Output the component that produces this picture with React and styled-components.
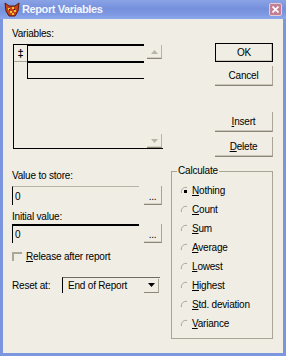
import React from 'react';
import styled, { createGlobalStyle } from 'styled-components';

const GlobalStyle = createGlobalStyle`
  html, body {
    margin: 0;
    padding: 0;
    background: #efede4;
  }
  body {
    font-family: 'Liberation Sans', Arial, sans-serif;
    font-size: 10px;
    letter-spacing: -0.2px;
    color: #000;
  }
`;

const Window = styled.div`
  width: 286px;
  height: 356px;
  box-sizing: border-box;
  border: 3px solid #7b95de;
  border-top: none;
  background: #efede4;
  display: flex;
  flex-direction: column;
`;

const TitleBar = styled.div`
  height: 19px;
  margin: 0 -3px;
  padding: 0 3px 0 4px;
  display: flex;
  align-items: center;
  gap: 2px;
  background: linear-gradient(to bottom, #8aa3e6 0%, #7690dc 45%, #7e99e2 75%, #8ca8ec 100%);
`;

const TitleText = styled.span`
  flex: 1;
  color: #f4f6ff;
  font-size: 11px;
  font-weight: bold;
  letter-spacing: -0.4px;
  line-height: 19px;
`;

const CloseButton = styled.div`
  width: 13px;
  height: 13px;
  box-sizing: border-box;
  margin-right: 1px;
  border: 1px solid #e4ccd8;
  border-radius: 2px;
  background: #c27f94;
  display: flex;
  align-items: center;
  justify-content: center;
`;

const Body = styled.div`
  flex: 1;
  display: grid;
  grid-template-columns: 150px 102px;
  column-gap: 9px;
  align-items: start;
  padding: 9px 0 0 9px;
`;

const Column = styled.div`
  display: flex;
  flex-direction: column;
`;

const Label = styled.div`
  height: 12px;
  line-height: 12px;
  margin-top: ${p => p.$top || 0}px;
  white-space: nowrap;
`;

const ListBox = styled.div`
  margin: 4px 0 0 1px;
  width: 150px;
  height: 105px;
  box-sizing: border-box;
  border-left: 1px solid #000;
  border-bottom: 1px solid #000;
  display: flex;
`;

const ListGrid = styled.div`
  width: 130px;
  display: grid;
  grid-template-columns: 13px 117px;
  grid-template-rows: 19px 16px;
  align-content: start;
`;

const CornerCell = styled.div`
  box-sizing: border-box;
  border-top: 1px solid #000;
  border-bottom: 1px solid #a8a597;
  height: 18px;
  font-weight: bold;
  font-size: 11px;
  line-height: 16px;
  text-align: center;
`;

const DataCell = styled.div`
  box-sizing: border-box;
  border-left: 1px solid #000;
  border-top: ${p => (p.$first ? '2px solid #000' : 'none')};
  border-bottom: ${p => (p.$first ? '2px' : '1px')} solid #000;
`;

const ScrollColumn = styled.div`
  margin-left: 3px;
  width: 15px;
  padding-top: 1px;
  display: flex;
  flex-direction: column;
  justify-content: space-between;
`;

const ScrollButton = styled.div`
  width: 15px;
  height: 14px;
  box-sizing: border-box;
  border-right: 1px solid #b8b5a6;
  border-bottom: 1px solid #8a877a;
  box-shadow: inset 0 -1px 0 #d6d3c5;
  display: flex;
  align-items: center;
  justify-content: center;
`;

const FieldRow = styled.div`
  display: flex;
  gap: 5px;
  margin-top: ${p => p.$top || 0}px;
`;

const TextField = styled.div`
  width: 127px;
  height: 19px;
  box-sizing: border-box;
  border-left: 1px solid #000;
  border-top: ${p => (p.$focused ? '2px solid #000' : '1px solid #b8b5a6')};
  padding-left: 2px;
  line-height: 17px;
  display: flex;
  align-items: center;
`;

const SmallButton = styled.div`
  width: 18px;
  height: 19px;
  box-sizing: border-box;
  border-right: 1px solid #a8a597;
  border-bottom: 1px solid #8a877a;
  box-shadow: inset 0 -1px 0 #d6d3c5;
  display: flex;
  align-items: flex-end;
  justify-content: center;
  padding-bottom: 3px;
  line-height: 8px;
`;

const CheckRow = styled.label`
  display: flex;
  align-items: center;
  gap: 4px;
  height: 12px;
  margin-top: 7px;
`;

const CheckBox = styled.span`
  width: 10px;
  height: 9px;
  box-sizing: border-box;
  border-top: 2px solid #aca899;
  border-left: 2px solid #aca899;
`;

const ResetRow = styled.div`
  display: flex;
  align-items: center;
  margin-top: 15px;
`;

const ResetLabel = styled.span`
  width: 50px;
`;

const Dropdown = styled.div`
  width: 98px;
  height: 16px;
  box-sizing: border-box;
  border-left: 1px solid #000;
  border-top: 1px solid #6f6d62;
  padding-left: 5px;
  display: flex;
  align-items: center;
  justify-content: space-between;
`;

const DropArrow = styled.div`
  width: 15px;
  height: 14px;
  margin-right: 1px;
  box-sizing: border-box;
  border-right: 1px solid #a8a597;
  border-bottom: 1px solid #8a877a;
  display: flex;
  align-items: center;
  justify-content: center;
`;

const DialogButton = styled.div`
  align-self: flex-end;
  width: 58px;
  height: ${p => (p.$default ? 19 : 20)}px;
  margin-top: ${p => p.$top}px;
  box-sizing: border-box;
  border: ${p => (p.$default ? '1px solid #000' : 'none')};
  border-right: 1px solid ${p => (p.$default ? '#000' : '#a8a597')};
  border-bottom: 1px solid ${p => (p.$default ? '#000' : '#8a877a')};
  box-shadow: inset ${p => (p.$default ? '-1px' : '0')} -1px 0 #c9c6b7;
  display: flex;
  align-items: center;
  justify-content: center;
  font-size: 10px;
`;

const Group = styled.fieldset`
  margin: 8px 0 0;
  padding: 4px 0 5px 0;
  min-width: 0;
  border: 1px solid #a8a597;
  display: flex;
  flex-direction: column;
`;

const Legend = styled.legend`
  margin-left: 5px;
  padding: 0 1px;
  line-height: 12px;
`;

const RadioRow = styled.div`
  height: 19px;
  padding-left: 8px;
  display: flex;
  align-items: center;
  gap: 2px;
`;

const AppIcon = () => (
  <svg width="16" height="16" viewBox="0 0 16 16">
    <path d="M1 1 L5 4 L11 4 L15 1 L14 9 L11 14 L5 14 L2 9 Z" fill="#c8401c" stroke="#5a1a08" strokeWidth="1" />
    <path d="M4 6h2v2H4zM8 5h2v2H8zM10 8h2v2h-2zM6 9h2v2H6zM8 11h2v2H8z" fill="#f2c23a" />
    <path d="M5 7h1v1H5zM10 7h1v1h-1z" fill="#1a1a1a" />
  </svg>
);

const Radio = ({ checked }) => (
  <svg width="10" height="10" viewBox="0 0 10 10">
    <path d="M1.5 7 A4.5 4.5 0 0 1 7 1.5" fill="none" stroke="#a8a597" strokeWidth="1" />
    {checked && <rect x="4" y="4" width="3" height="3" fill="#000" />}
  </svg>
);

const Triangle = ({ down, color }) => (
  <svg width="7" height="4" viewBox="0 0 7 4">
    <path d={down ? 'M0 0h7L3.5 4z' : 'M3.5 0L7 4H0z'} fill={color} />
  </svg>
);

const calcOptions = [
  { key: 'N', rest: 'othing', checked: true },
  { key: 'C', rest: 'ount' },
  { key: 'S', rest: 'um' },
  { key: 'A', rest: 'verage' },
  { key: 'L', rest: 'owest' },
  { key: 'H', rest: 'ighest' },
  { key: 'S', rest: 'td. deviation' },
  { key: 'V', rest: 'ariance' },
];

export default function App() {
  return (
    <>
      <GlobalStyle />
      <Window>
        <TitleBar>
          <AppIcon />
          <TitleText>Report Variables</TitleText>
          <CloseButton>
            <svg width="7" height="7" viewBox="0 0 7 7">
              <path d="M0.5 0.5L6.5 6.5M6.5 0.5L0.5 6.5" stroke="#fff" strokeWidth="1.6" />
            </svg>
          </CloseButton>
        </TitleBar>

        <Body>
          <Column>
            <Label>Variables:</Label>
            <ListBox>
              <ListGrid>
                <CornerCell>‡</CornerCell>
                <DataCell $first />
                <div />
                <DataCell />
              </ListGrid>
              <ScrollColumn>
                <ScrollButton><Triangle color="#b8b5a6" /></ScrollButton>
                <ScrollButton><Triangle down color="#b8b5a6" /></ScrollButton>
              </ScrollColumn>
            </ListBox>

            <Label $top={21}>Value to store:</Label>
            <FieldRow $top={4}>
              <TextField>0</TextField>
              <SmallButton>...</SmallButton>
            </FieldRow>

            <Label $top={6}>Initial value:</Label>
            <FieldRow $top={1}>
              <TextField $focused>0</TextField>
              <SmallButton>...</SmallButton>
            </FieldRow>

            <CheckRow>
              <CheckBox />
              <span><u>R</u>elease after report</span>
            </CheckRow>

            <ResetRow>
              <ResetLabel>Reset at:</ResetLabel>
              <Dropdown>
                <span>End of Report</span>
                <DropArrow><Triangle down color="#000" /></DropArrow>
              </Dropdown>
            </ResetRow>
          </Column>

          <Column>
            <DialogButton $default $top={15}>OK</DialogButton>
            <DialogButton $top={4}>Cancel</DialogButton>
            <DialogButton $top={26}><span><u>I</u>nsert</span></DialogButton>
            <DialogButton $top={5}><span><u>D</u>elete</span></DialogButton>
            <Group>
              <Legend>Calculate</Legend>
              {calcOptions.map((o, i) => (
                <RadioRow key={i}>
                  <Radio checked={o.checked} />
                  <span><u>{o.key}</u>{o.rest}</span>
                </RadioRow>
              ))}
            </Group>
          </Column>
        </Body>
      </Window>
    </>
  );
}
